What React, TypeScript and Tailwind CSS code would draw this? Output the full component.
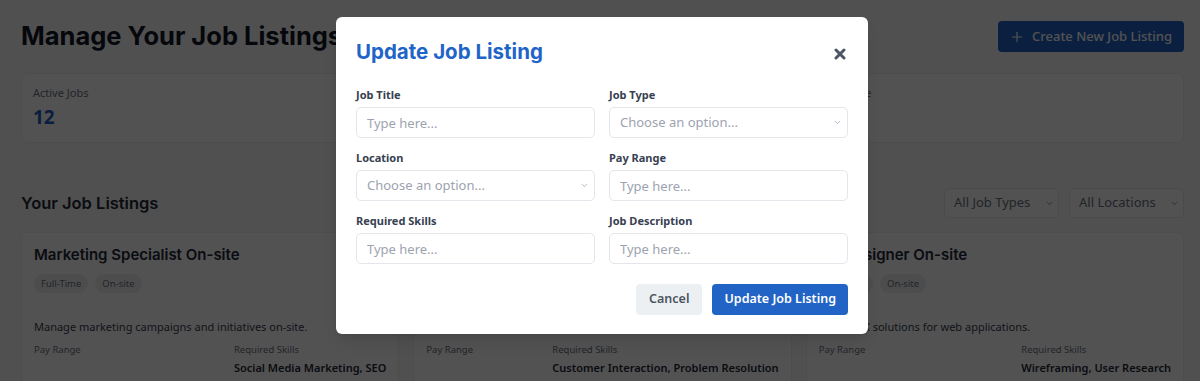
import { Plus, ChevronDown } from 'lucide-react';

const heading = { fontFamily: 'Inter, "Noto Sans", sans-serif' };

function Field({ label, select }: { label: string; select?: boolean }) {
  return (
    <div>
      <label className="block text-[11px] font-bold text-[#374151] mb-[4px] leading-[16px]">{label}</label>
      {select ? (
        <div className="relative">
          <select className="w-full h-[31px] appearance-none rounded-[5px] border border-[#e3e6ea] bg-white px-[10px] text-[13px] text-[#9ca3af] outline-none">
            <option>Choose an option...</option>
          </select>
          <ChevronDown size={9} strokeWidth={2} className="absolute right-[6px] top-[11px] text-[#9ca3af]" />
        </div>
      ) : (
        <input
          placeholder="Type here..."
          className="w-full h-[31px] rounded-[5px] border border-[#e3e6ea] bg-white px-[10px] text-[13px] placeholder:text-[#9ca3af] outline-none"
        />
      )}
    </div>
  );
}

function Filter({ label }: { label: string }) {
  return (
    <div className="relative w-[115px]">
      <select className="w-full h-[30px] appearance-none rounded-[5px] border border-[#e5e7eb] bg-white pl-[9px] text-[13px] text-[#6b7280] outline-none">
        <option>{label}</option>
      </select>
      <ChevronDown size={9} strokeWidth={2} className="absolute right-[5px] top-[11px] text-[#6b7280]" />
    </div>
  );
}

export default function App() {
  const stats = [
    { label: 'Active Jobs', value: '12' },
    { label: 'Total Applicants', value: '248' },
    { label: 'Avg. Score', value: '86%' }
  ];

  const jobs = [
    {
      title: 'Marketing Specialist On-site',
      tags: ['Full-Time', 'On-site'],
      description: 'Manage marketing campaigns and initiatives on-site.',
      skills: 'Social Media Marketing, SEO'
    },
    {
      title: 'Customer Support Specialist Remote',
      tags: ['Part-Time', 'Remote'],
      description: 'Assist customers with inquiries and resolve issues.',
      skills: 'Customer Interaction, Problem Resolution'
    },
    {
      title: 'UX Designer On-site',
      tags: ['Full-Time', 'On-site'],
      description: 'Create UX solutions for web applications.',
      skills: 'Wireframing, User Research'
    }
  ];

  return (
    <div className="relative h-[381px] overflow-hidden bg-[#f7f8f8]" style={{ fontFamily: '"Noto Sans", "Open Sans", sans-serif' }}>
      <div className="pl-[21px] pr-[16px] pt-[21px]">
        <div className="flex items-center justify-between h-[31px]">
          <h1 className="text-[25.5px] font-bold text-[#111827]" style={heading}>
            Manage Your Job Listings
          </h1>
          <button className="flex items-center gap-[7px] h-[31px] pl-[11px] pr-[12px] rounded-[4px] bg-[#2264c6] text-white text-[13px] font-medium">
            <Plus size={16} strokeWidth={1.75} />
            Create New Job Listing
          </button>
        </div>

        <div className="grid grid-cols-3 gap-[14px] mt-[21px]">
          {stats.map((s) => (
            <div key={s.label} className="h-[70px] rounded-[6px] bg-white border border-[#eceef0] px-[11px] pt-[11px]">
              <div className="text-[11px] text-[#6b7280] leading-[16px]">{s.label}</div>
              <div className="text-[19px] font-bold text-[#1f5fc4] leading-[24px] mt-[4px]">{s.value}</div>
            </div>
          ))}
        </div>

        <div className="flex items-center justify-between mt-[45px] h-[30px]">
          <h2 className="text-[16.5px] font-semibold text-[#1f2937]" style={heading}>
            Your Job Listings
          </h2>
          <div className="flex gap-[10px]">
            <Filter label="All Job Types" />
            <Filter label="All Locations" />
          </div>
        </div>

        <div className="grid grid-cols-3 gap-[14px] mt-[14px]">
          {jobs.map((j) => (
            <div key={j.title} className="rounded-[6px] bg-white border border-[#eceef0] px-[12px] pt-[12px] pb-[14px]">
              <h3 className="text-[15px] font-semibold text-[#1f2937] leading-[20px]" style={heading}>
                {j.title}
              </h3>
              <div className="flex gap-[7px] mt-[9px]">
                {j.tags.map((t) => (
                  <span key={t} className="rounded-full bg-[#eef0f2] px-[7px] h-[19px] leading-[19px] text-[9.5px] text-[#6b7280]">
                    {t}
                  </span>
                ))}
              </div>
              <p className="mt-[26px] text-[11px] text-[#374151] leading-[16px]">{j.description}</p>
              <div className="flex justify-between mt-[8px]">
                <div className="text-[9.5px] text-[#6b7280] leading-[14px]">Pay Range</div>
                <div>
                  <div className="text-[9.5px] text-[#6b7280] leading-[14px]">Required Skills</div>
                  <div className="text-[11px] font-semibold text-[#1f2937] leading-[18px] mt-[2px]">{j.skills}</div>
                </div>
              </div>
            </div>
          ))}
        </div>
      </div>

      <div className="absolute inset-0 bg-[rgba(0,0,0,0.68)] flex justify-center items-start">
        <div className="mt-[17px] ml-[4px] w-[532px] rounded-[6px] bg-white px-[20px] pt-[22px] pb-[19px] shadow-lg">
          <div className="flex items-center justify-between h-[26px]">
            <h2 className="text-[20.5px] font-bold text-[#1f64c8]" style={heading}>
              Update Job Listing
            </h2>
            <svg width="12" height="12" viewBox="0 0 12 12" className="mr-[2px] mt-[3px]">
              <path d="M2 2 L10 10 M10 2 L2 10" stroke="#4b5563" strokeWidth="3" strokeLinecap="round" />
            </svg>
          </div>
          <div className="grid grid-cols-2 gap-x-[14px] gap-y-[12px] mt-[22px]">
            <Field label="Job Title" />
            <Field label="Job Type" select />
            <Field label="Location" select />
            <Field label="Pay Range" />
            <Field label="Required Skills" />
            <Field label="Job Description" />
          </div>
          <div className="flex justify-end gap-[10px] mt-[20px]">
            <button className="h-[31px] px-[13px] rounded-[4px] bg-[#edf0f2] text-[12.5px] font-semibold text-[#4b5563]">Cancel</button>
            <button className="h-[31px] px-[12px] rounded-[4px] bg-[#2264c6] text-[12.5px] font-semibold text-white">Update Job Listing</button>
          </div>
        </div>
      </div>
    </div>
  );
}
